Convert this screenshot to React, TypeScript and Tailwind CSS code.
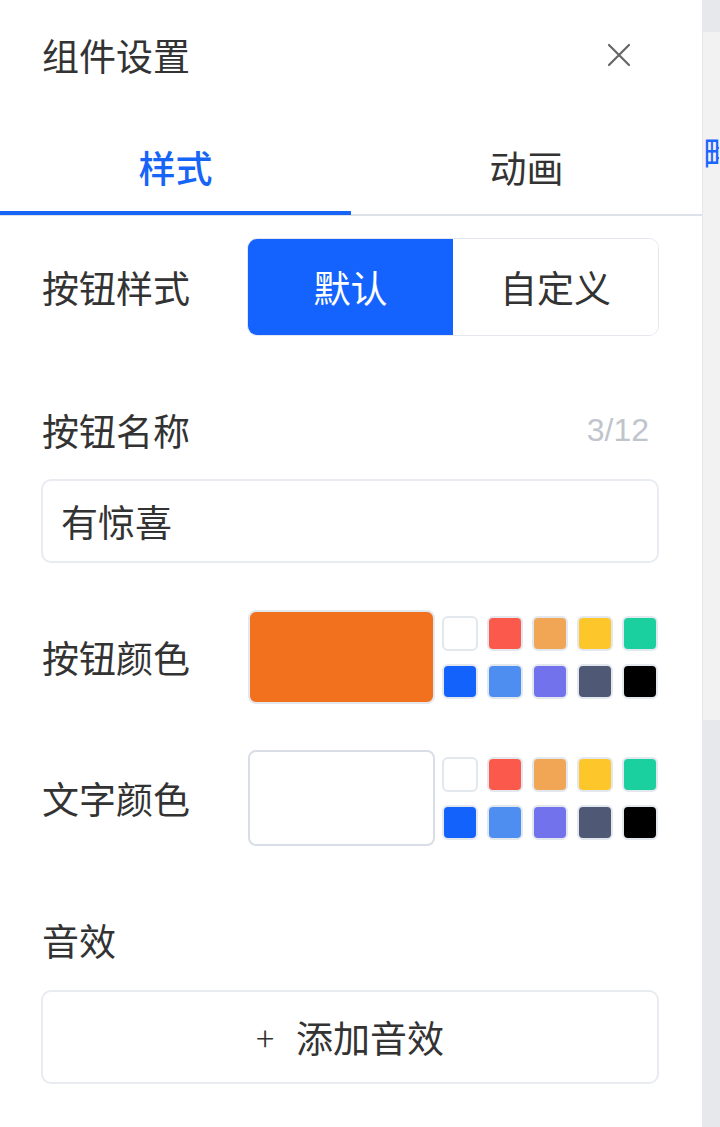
import React from "react";

const top = ["#ffffff", "#fa594b", "#f1a655", "#fdc62a", "#1ad09f"];
const bottom = ["#1462fc", "#4e8ef0", "#7272ec", "#4f5874", "#000000"];

function Swatches() {
  return (
    <div className="grid grid-cols-[repeat(5,36px)] grid-rows-[repeat(2,35px)] gap-x-[9px] gap-y-[13px]">
      {[...top, ...bottom].map((c, i) => (
        <div
          key={i}
          className="rounded-[6px] border-2 border-[#e3e7ee]"
          style={{ backgroundColor: c }}
        />
      ))}
    </div>
  );
}

export default function App() {
  return (
    <div
      className="flex h-[1127px] w-[720px] overflow-hidden bg-white text-[#333333]"
      style={{ fontFamily: '"Noto Sans CJK SC", "Noto Sans", sans-serif' }}
    >
      <div className="flex w-[703px] shrink-0 flex-col border-r border-[#e4e7ed] bg-white">
        {/* header */}
        <div className="flex h-[110px] items-center justify-between pl-[42px] pr-[71px]">
          <span className="text-[37px] leading-none">组件设置</span>
          <svg width="24" height="24" viewBox="0 0 24 24" fill="none">
            <path d="M2 2L22 22M22 2L2 22" stroke="#666666" strokeWidth="2.2" strokeLinecap="round" />
          </svg>
        </div>
        {/* tabs */}
        <div className="flex h-[106px] border-b-2 border-[#dde1e8]">
          <div className="relative flex flex-1 items-center justify-center pt-[10px]">
            <span className="text-[37px] font-medium leading-none text-[#1765f6]">样式</span>
            <div className="absolute bottom-[-1px] left-0 h-[4px] w-full bg-[#1765f6]" />
          </div>
          <div className="flex flex-1 items-center justify-center pt-[10px]">
            <span className="text-[37px] leading-none text-[#333333]">动画</span>
          </div>
        </div>
        {/* content */}
        <div className="flex flex-col pl-[41px] pr-[43px]">
          <div className="mt-[22px] flex h-[98px] items-center">
            <span className="w-[206px] pl-[1px] text-[37px] leading-none">按钮样式</span>
            <div className="flex h-full w-[412px] overflow-hidden rounded-[10px] border border-[#e4e7ed]">
              <div className="flex flex-1 items-center justify-center bg-[#1463ff] text-[37px] leading-none text-white">
                默认
              </div>
              <div className="flex flex-1 items-center justify-center bg-white text-[37px] leading-none text-[#333333]">
                自定义
              </div>
            </div>
          </div>

          <div className="mt-[69px] flex h-[50px] items-center justify-between pl-[1px] pr-[10px]">
            <span className="text-[37px] leading-none">按钮名称</span>
            <span
              className="text-[32px] leading-none text-[#c0c4cc]"
              style={{ fontFamily: '"Liberation Sans", Arial, sans-serif' }}
            >
              3/12
            </span>
          </div>
          <div className="mt-[24px] flex h-[84px] items-center rounded-[10px] border-2 border-[#e8ebf0] pl-[18px]">
            <span className="text-[37px] leading-none">有惊喜</span>
          </div>

          <div className="mt-[47px] flex h-[94px] items-center">
            <span className="w-[207px] pl-[1px] text-[37px] leading-none">按钮颜色</span>
            <div className="h-full w-[187px] rounded-[8px] border-2 border-[#e3e7ee] bg-[#f2711f]" />
            <div className="ml-[7px]">
              <Swatches />
            </div>
          </div>

          <div className="mt-[46px] flex h-[96px] items-center">
            <span className="w-[207px] pl-[1px] text-[37px] leading-none">文字颜色</span>
            <div className="h-full w-[187px] rounded-[8px] border-2 border-[#d9dee6] bg-white" />
            <div className="ml-[7px]">
              <Swatches />
            </div>
          </div>

          <div className="mt-[69px] flex h-[50px] items-center pl-[1px]">
            <span className="text-[37px] leading-none">音效</span>
          </div>
          <div className="mt-[25px] flex h-[94px] items-center justify-center rounded-[10px] border-2 border-[#e8ebf0]">
            <span className="mr-[22px] text-[34px] font-light leading-none">+</span>
            <span className="text-[37px] leading-none">添加音效</span>
          </div>
        </div>
      </div>
      {/* right background strip */}
      <div className="flex flex-1 flex-col overflow-hidden">
        <div className="h-[32px] bg-[#e6e8ec]" />
        <div className="h-[688px] overflow-hidden bg-[#f2f2f3] pt-[103px]">
          <span className="block w-[16px] overflow-hidden whitespace-nowrap text-[37px] leading-none text-[#1a66ff]">略</span>
        </div>
        <div className="flex-1 bg-[#e6e8ec]" />
      </div>
    </div>
  );
}
